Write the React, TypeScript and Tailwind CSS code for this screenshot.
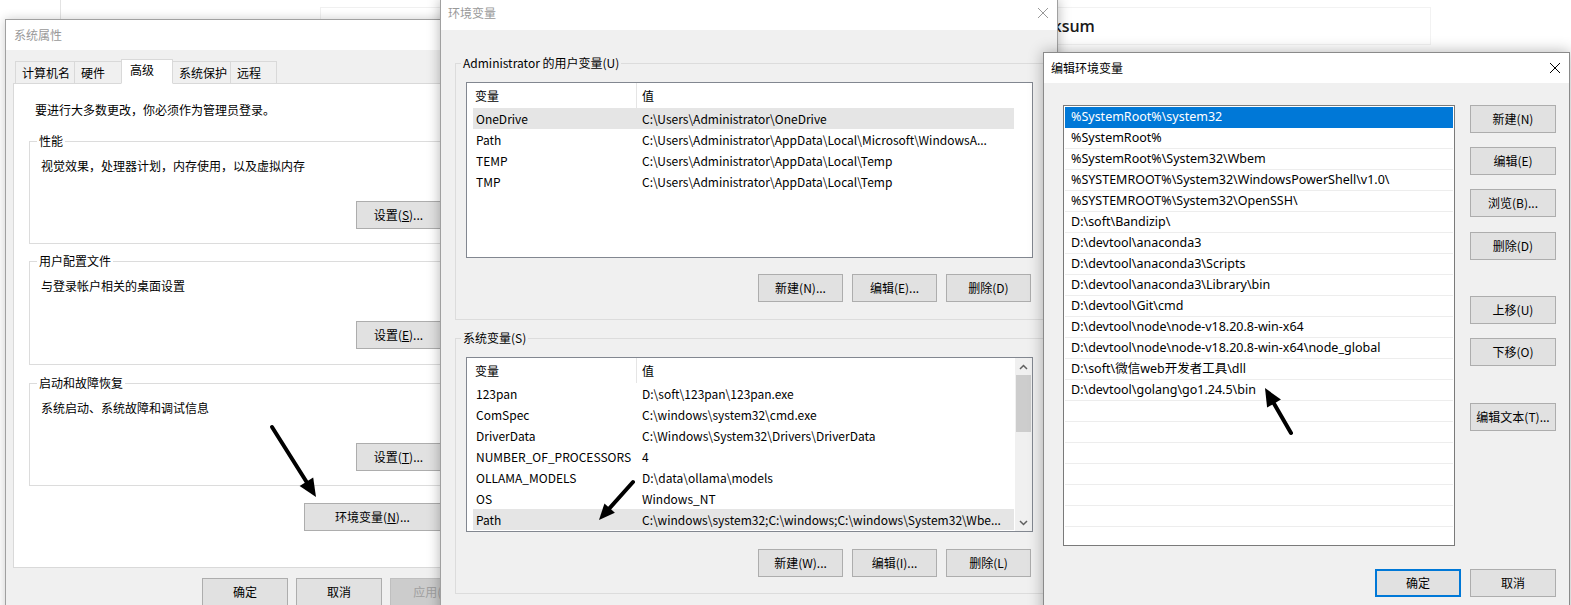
import React from 'react'

const userVars: [string, string][] = [
  ['OneDrive', 'C:\\Users\\Administrator\\OneDrive'],
  ['Path', 'C:\\Users\\Administrator\\AppData\\Local\\Microsoft\\WindowsA...'],
  ['TEMP', 'C:\\Users\\Administrator\\AppData\\Local\\Temp'],
  ['TMP', 'C:\\Users\\Administrator\\AppData\\Local\\Temp'],
]

const sysVars: [string, string][] = [
  ['123pan', 'D:\\soft\\123pan\\123pan.exe'],
  ['ComSpec', 'C:\\windows\\system32\\cmd.exe'],
  ['DriverData', 'C:\\Windows\\System32\\Drivers\\DriverData'],
  ['NUMBER_OF_PROCESSORS', '4'],
  ['OLLAMA_MODELS', 'D:\\data\\ollama\\models'],
  ['OS', 'Windows_NT'],
  ['Path', 'C:\\windows\\system32;C:\\windows;C:\\windows\\System32\\Wbe...'],
]

const pathEntries = [
  '%SystemRoot%\\system32',
  '%SystemRoot%',
  '%SystemRoot%\\System32\\Wbem',
  '%SYSTEMROOT%\\System32\\WindowsPowerShell\\v1.0\\',
  '%SYSTEMROOT%\\System32\\OpenSSH\\',
  'D:\\soft\\Bandizip\\',
  'D:\\devtool\\anaconda3',
  'D:\\devtool\\anaconda3\\Scripts',
  'D:\\devtool\\anaconda3\\Library\\bin',
  'D:\\devtool\\Git\\cmd',
  'D:\\devtool\\node\\node-v18.20.8-win-x64',
  'D:\\devtool\\node\\node-v18.20.8-win-x64\\node_global',
  'D:\\soft\\微信web开发者工具\\dll',
  'D:\\devtool\\golang\\go1.24.5\\bin',
]

function Btn({ children, w = 'w-[85px]', disabled = false, primary = false }: { children: React.ReactNode; w?: string; disabled?: boolean; primary?: boolean }) {
  const border = primary ? 'border-2 border-[#0078d7]' : disabled ? 'border border-[#bfbfbf]' : 'border border-[#adadad]'
  return (
    <div className={`${w} ${border} flex h-[28px] shrink-0 items-center justify-center text-[12px] leading-[16px] ${disabled ? 'bg-[#cccccc] text-[#a0a0a0]' : 'bg-[#e1e1e1] text-black'}`}>
      {children}
    </div>
  )
}

function Tab({ children, w, active = false }: { children: React.ReactNode; w: string; active?: boolean }) {
  if (active) {
    return (
      <div className={`${w} relative z-10 -ml-px h-[25px] border border-[#d9d9d9] border-b-white bg-white pl-[8px] pt-[2px] text-[12px] leading-[16px]`}>
        {children}
      </div>
    )
  }
  return (
    <div className={`${w} -ml-px h-[23px] border border-[#d9d9d9] bg-[#f0f0f0] pl-[6px] pt-[3px] text-[12px] leading-[16px] first:ml-0`}>
      {children}
    </div>
  )
}

function Group({ title, desc, btn, h }: { title: string; desc: string; btn: React.ReactNode; h: string }) {
  return (
    <fieldset className={`${h} w-[422px] border border-[#dcdcdc]`}>
      <legend className="ml-[7px] px-[2px] text-[12px] leading-[16px]">{title}</legend>
      <div className="mt-[9px] pl-[11px] text-[12px] leading-[16px]">{desc}</div>
      <div className="mt-[27px] flex justify-end pr-[9px]">{btn}</div>
    </fieldset>
  )
}

function VarList({ rows, selected, scroll, h }: { rows: [string, string][]; selected: number; scroll?: boolean; h: string }) {
  return (
    <div className={`${h} ml-[10px] flex w-[567px] border border-[#828790] bg-white text-[12px]`}>
      <div className="flex-1">
        <div className="flex h-[25px] w-[547px] items-center">
          <div className="flex h-full w-[170px] items-center border-r border-[#e5e5e5] pl-[8px]">变量</div>
          <div className="pl-[5px]">值</div>
        </div>
        {rows.map(([k, v], i) => (
          <div key={k + i} className={`ml-[6px] flex h-[21px] w-[541px] items-center whitespace-nowrap ${i === selected ? 'bg-[#e5e5e5]' : ''}`}>
            <div className="w-[165px] overflow-hidden pl-[3px]">{k}</div>
            <div className="pl-[4px]">{v}</div>
          </div>
        ))}
      </div>
      {scroll && (
        <div className="flex w-[17px] flex-col items-center bg-[#f0f0f0]">
          <div className="flex h-[17px] items-center justify-center">
            <svg width="9" height="6" viewBox="0 0 9 6"><path d="M1 5 L4.5 1.5 L8 5" fill="none" stroke="#606060" strokeWidth="1.5" /></svg>
          </div>
          <div className="h-[57px] w-[15px] bg-[#cdcdcd]" />
          <div className="flex-1" />
          <div className="flex h-[17px] items-center justify-center">
            <svg width="9" height="6" viewBox="0 0 9 6"><path d="M1 1 L4.5 4.5 L8 1" fill="none" stroke="#606060" strokeWidth="1.5" /></svg>
          </div>
        </div>
      )}
    </div>
  )
}

function Arrow({ x1, y1, x2, y2, head = 18, half = 8 }: { x1: number; y1: number; x2: number; y2: number; head?: number; half?: number }) {
  const dx = x2 - x1
  const dy = y2 - y1
  const len = Math.hypot(dx, dy)
  const ux = dx / len
  const uy = dy / len
  const bx = x2 - ux * head
  const by = y2 - uy * head
  const px = -uy
  const py = ux
  return (
    <g>
      <line x1={x1} y1={y1} x2={bx + ux * 3} y2={by + uy * 3} stroke="#000" strokeWidth="4" strokeLinecap="round" />
      <polygon points={`${x2},${y2} ${bx + px * half},${by + py * half} ${bx - px * half},${by - py * half}`} fill="#000" />
    </g>
  )
}

function Close({ color }: { color: string }) {
  return (
    <svg width="12" height="12" viewBox="0 0 12 12">
      <path d="M1 1 L11 11 M11 1 L1 11" stroke={color} strokeWidth="1" />
    </svg>
  )
}

export default function App() {
  return (
    <div className="relative h-[605px] w-[1571px] overflow-hidden bg-white font-['Noto_Sans_CJK_SC','Noto_Sans',sans-serif] text-black">
      {/* desktop behind the dialogs */}
      <div className="absolute left-[60px] top-0 h-[20px] w-px bg-[#e3e3e3]" />
      <div className="absolute left-[320px] top-[7px] h-[20px] w-[200px] border border-[#f0f0f0]" />
      <div className="absolute left-[960px] top-[7px] flex h-[38px] w-[471px] items-center border border-[#f2f2f2] pl-[54px] font-['Open_Sans',sans-serif] text-[16px] font-semibold text-[#1a1a1a]">
        Checksum
      </div>

      {/* 系统属性 */}
      <div className="absolute left-[5px] top-[19px] h-[600px] w-[480px] border border-[#a0a0a0] bg-[#f0f0f0] shadow-[0_0_10px_rgba(0,0,0,0.2)]">
        <div className="flex h-[30px] items-center bg-white pl-[8px] text-[12px] text-[#999]">系统属性</div>
        <div className="px-[7px] pt-[9px]">
          <div className="relative -mb-px flex items-end pl-[2px]">
            <Tab w="w-[60px]">计算机名</Tab>
            <Tab w="w-[48px]">硬件</Tab>
            <Tab w="w-[52px]" active>高级</Tab>
            <Tab w="w-[59px]">系统保护</Tab>
            <Tab w="w-[47px]">远程</Tab>
          </div>
          <div className="h-[485px] border border-[#d9d9d9] bg-white">
            <div className="pl-[21px] pt-[18px] text-[12px] leading-[16px]">要进行大多数更改，你必须作为管理员登录。</div>
            <div className="flex flex-col pl-[15px]">
              <div className="mt-[15px]">
                <Group h="h-[111px]" title="性能" desc="视觉效果，处理器计划，内存使用，以及虚拟内存" btn={<Btn>设置(<u>S</u>)...</Btn>} />
              </div>
              <div className="mt-[9px]">
                <Group h="h-[112px]" title="用户配置文件" desc="与登录帐户相关的桌面设置" btn={<Btn>设置(<u>E</u>)...</Btn>} />
              </div>
              <div className="mt-[10px]">
                <Group h="h-[111px]" title="启动和故障恢复" desc="系统启动、系统故障和调试信息" btn={<Btn>设置(<u>T</u>)...</Btn>} />
              </div>
              <div className="mt-[17px] flex w-[422px] justify-end pr-[10px]">
                <Btn w="w-[137px]">环境变量(<u>N</u>)...</Btn>
              </div>
            </div>
          </div>
          <div className="mt-[10px] flex justify-end gap-[8px] pr-[1px]">
            <Btn w="w-[86px]">确定</Btn>
            <Btn w="w-[86px]">取消</Btn>
            <Btn w="w-[86px]" disabled>应用(A)</Btn>
          </div>
        </div>
      </div>

      {/* 环境变量 */}
      <div className="absolute left-[440px] top-0 h-[700px] w-[618px] border-x border-[#a0a0a0] bg-[#f0f0f0] shadow-[0_0_12px_rgba(0,0,0,0.3)]">
        <div className="flex h-[30px] items-center justify-between bg-white pb-[4px] pl-[7px] pr-[8px] text-[12px] text-[#999]">
          <span>环境变量</span>
          <Close color="#999" />
        </div>
        <div className="pl-[14px] pt-[25px]">
          <fieldset className="h-[265px] w-[591px] border border-[#dcdcdc]">
            <legend className="ml-[5px] px-[2px] text-[12px] leading-[16px]">Administrator 的用户变量(U)</legend>
            <div className="mt-[11px]">
              <VarList h="h-[176px]" rows={userVars} selected={0} />
            </div>
            <div className="mt-[16px] flex justify-end gap-[9px] pr-[14px]">
              <Btn>新建(N)...</Btn>
              <Btn>编辑(E)...</Btn>
              <Btn>删除(D)</Btn>
            </div>
          </fieldset>
          <fieldset className="mt-[10px] h-[264px] w-[591px] border border-[#dcdcdc]">
            <legend className="ml-[5px] px-[2px] text-[12px] leading-[16px]">系统变量(S)</legend>
            <div className="mt-[11px]">
              <VarList h="h-[175px]" rows={sysVars} selected={6} scroll />
            </div>
            <div className="mt-[17px] flex justify-end gap-[9px] pr-[14px]">
              <Btn>新建(W)...</Btn>
              <Btn>编辑(I)...</Btn>
              <Btn>删除(L)</Btn>
            </div>
          </fieldset>
        </div>
      </div>

      {/* 编辑环境变量 */}
      <div className="absolute left-[1043px] top-[52px] h-[600px] w-[527px] border border-[#8a8a8a] bg-[#f0f0f0] shadow-[0_0_14px_rgba(0,0,0,0.3)]">
        <div className="flex h-[30px] items-center justify-between bg-white pl-[7px] pr-[8px] text-[12px]">
          <span>编辑环境变量</span>
          <Close color="#000" />
        </div>
        <div className="pl-[19px] pt-[22px]">
          <div className="flex">
            <div className="h-[441px] w-[392px] overflow-hidden border border-[#7a7a7a] bg-white p-px font-['Noto_Sans','Noto_Sans_CJK_SC',sans-serif] text-[12.5px]">
              {Array.from({ length: 21 }).map((_, i) => (
                <div
                  key={i}
                  className={`flex h-[21px] items-center whitespace-nowrap border-b pl-[6px] ${i === 0 ? 'border-[#0078d7] bg-[#0078d7] text-white' : 'border-[#ededed]'}`}
                >
                  {pathEntries[i] ?? ''}
                </div>
              ))}
            </div>
            <div className="ml-[15px] flex flex-col">
              <Btn w="w-[86px]">新建(N)</Btn>
              <div className="mt-[14px]"><Btn w="w-[86px]">编辑(E)</Btn></div>
              <div className="mt-[14px]"><Btn w="w-[86px]">浏览(B)...</Btn></div>
              <div className="mt-[15px]"><Btn w="w-[86px]">删除(D)</Btn></div>
              <div className="mt-[36px]"><Btn w="w-[86px]">上移(U)</Btn></div>
              <div className="mt-[14px]"><Btn w="w-[86px]">下移(O)</Btn></div>
              <div className="mt-[37px]"><Btn w="w-[86px]">编辑文本(T)...</Btn></div>
            </div>
          </div>
          <div className="mt-[23px] flex justify-end gap-[9px] pr-[13px]">
            <Btn w="w-[86px]" primary>确定</Btn>
            <Btn w="w-[86px]">取消</Btn>
          </div>
        </div>
      </div>

      {/* annotation arrows */}
      <svg className="pointer-events-none absolute inset-0 z-50" width="1571" height="605">
        <Arrow x1={272} y1={427} x2={316} y2={497} />
        <Arrow x1={633} y1={482} x2={599} y2={520} head={16} half={7} />
        <Arrow x1={1291} y1={433} x2={1265} y2={388} />
      </svg>
    </div>
  )
}
